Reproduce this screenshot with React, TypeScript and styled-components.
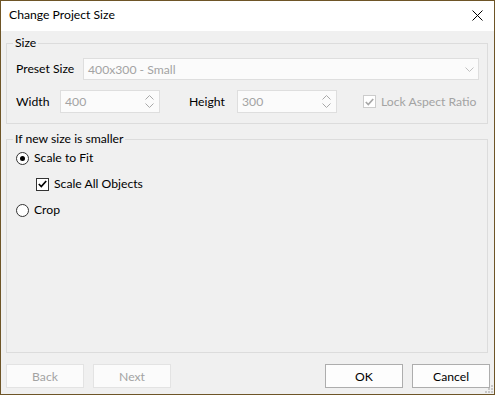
import React from "react";
import styled, { createGlobalStyle } from "styled-components";

const GlobalStyle = createGlobalStyle`
  html, body {
    margin: 0;
    padding: 0;
    background: #f0f0f0;
  }
  body {
    font-family: Lato, "Noto Sans", sans-serif;
    font-size: 12px;
    color: #000;
  }
`;

const Window = styled.div`
  width: 495px;
  height: 395px;
  box-sizing: border-box;
  border: 1px solid #6e5527;
  display: flex;
  flex-direction: column;
  background: #f0f0f0;
`;

const TitleBar = styled.div`
  height: 30px;
  background: #ffffff;
  display: flex;
  align-items: center;
  justify-content: space-between;
  padding: 0 8px 0 8px;
`;

const Title = styled.span`
  font-size: 12.2px;
  line-height: 16px;
  margin-top: -2px;
`;

const CloseButton = styled.div`
  width: 14px;
  height: 14px;
  display: flex;
  align-items: center;
  justify-content: center;
  margin-right: 2px;
  margin-top: -1px;
`;

const Body = styled.div`
  flex: 1;
  display: flex;
  flex-direction: column;
  padding: 4px 4px 6px 5px;
`;

const Group = styled.fieldset<{ $grow?: boolean }>`
  margin: 0 2px 0 0;
  padding: 0 8px 10px 9px;
  border: 1px solid #dcdcdc;
  min-width: 0;
  ${(p) => (p.$grow ? "flex: 1; margin-top: 7px;" : "")}
`;

const Legend = styled.legend`
  padding: 0 2px;
  margin-left: -3px;
  line-height: 16px;
  font-size: 12.2px;
`;

const Row = styled.div<{ $top: number }>`
  display: flex;
  align-items: center;
  margin-top: ${(p) => p.$top}px;
`;

const Label = styled.span<{ $w: number; $ml?: number }>`
  width: ${(p) => p.$w}px;
  margin-left: ${(p) => p.$ml ?? 0}px;
  flex-shrink: 0;
  line-height: 16px;
  font-size: 12.2px;
  white-space: nowrap;
`;

const Combo = styled.div`
  flex: 1;
  height: 22px;
  box-sizing: border-box;
  border: 1px solid #dedede;
  background: #fbfbfb;
  color: #a3a3a3;
  font-size: 12.2px;
  display: flex;
  align-items: center;
  justify-content: space-between;
  padding: 0 4px 0 4px;
`;

const Spin = styled.div`
  width: 100px;
  height: 23px;
  box-sizing: border-box;
  border: 1px solid #dedede;
  background: #fbfbfb;
  color: #a3a3a3;
  font-size: 12.2px;
  display: flex;
  align-items: center;
  justify-content: space-between;
  padding: 0 4px 0 4px;
`;

const SpinArrows = styled.div`
  display: flex;
  flex-direction: column;
  gap: 3px;
  margin-right: 1px;
`;

const Check = styled.span<{ $disabled?: boolean }>`
  width: 13px;
  height: 13px;
  box-sizing: border-box;
  border: 1px solid ${(p) => (p.$disabled ? "#cccccc" : "#333333")};
  background: #ffffff;
  display: inline-flex;
  align-items: center;
  justify-content: center;
  flex-shrink: 0;
`;

const Radio = styled.span<{ $checked?: boolean }>`
  width: 13px;
  height: 13px;
  box-sizing: border-box;
  border: 1px solid #333333;
  border-radius: 50%;
  background: #ffffff;
  display: inline-flex;
  align-items: center;
  justify-content: center;
  flex-shrink: 0;

  &::after {
    content: "";
    width: 5px;
    height: 5px;
    border-radius: 50%;
    background: ${(p) => (p.$checked ? "#000000" : "transparent")};
  }
`;

const Option = styled.label<{ $indent?: number; $top: number; $disabled?: boolean }>`
  display: flex;
  align-items: center;
  gap: 5px;
  margin-left: ${(p) => p.$indent ?? 0}px;
  margin-top: ${(p) => p.$top}px;
  color: ${(p) => (p.$disabled ? "#a3a3a3" : "#000000")};
  line-height: 16px;
  font-size: 12.2px;
  white-space: nowrap;
`;

const Footer = styled.div`
  display: flex;
  align-items: center;
  gap: 11px;
  margin-top: 11px;
  position: relative;
`;

const Button = styled.div<{ $disabled?: boolean }>`
  width: 78px;
  height: 24px;
  box-sizing: border-box;
  border: 1px solid ${(p) => (p.$disabled ? "#e3e3e3" : "#adadad")};
  background: ${(p) => (p.$disabled ? "#fbfbfb" : "#fdfdfd")};
  color: ${(p) => (p.$disabled ? "#a3a3a3" : "#000000")};
  font-size: 12.2px;
  display: flex;
  align-items: center;
  justify-content: center;

  & + & {
    margin-left: -2px;
  }
`;

const Spacer = styled.div`
  flex: 1;
`;

const Grip = styled.svg`
  position: absolute;
  right: -4px;
  bottom: -6px;
`;

const ChevronDown = ({ color = "#a8a8a8" }: { color?: string }) => (
  <svg width="9" height="5" viewBox="0 0 9 5">
    <polyline points="0.5,0.5 4.5,4.5 8.5,0.5" fill="none" stroke={color} strokeWidth="1" />
  </svg>
);

const ChevronUp = ({ color = "#a8a8a8" }: { color?: string }) => (
  <svg width="9" height="5" viewBox="0 0 9 5">
    <polyline points="0.5,4.5 4.5,0.5 8.5,4.5" fill="none" stroke={color} strokeWidth="1" />
  </svg>
);

const Tick = ({ color }: { color: string }) => (
  <svg width="9" height="8" viewBox="0 0 9 8">
    <polyline points="0.8,4 3.3,6.5 8.2,1" fill="none" stroke={color} strokeWidth="1.7" />
  </svg>
);

export default function App() {
  return (
    <>
      <GlobalStyle />
      <Window>
        <TitleBar>
          <Title>Change Project Size</Title>
          <CloseButton>
            <svg width="11" height="11" viewBox="0 0 11 11">
              <path d="M0.5 0.5 L10.5 10.5 M10.5 0.5 L0.5 10.5" stroke="#000" strokeWidth="1" />
            </svg>
          </CloseButton>
        </TitleBar>
        <Body>
          <Group>
            <Legend>Size</Legend>
            <Row $top={7}>
              <Label $w={67}>Preset Size</Label>
              <Combo>
                <span>400x300 - Small</span>
                <ChevronDown color="#c0c0c0" />
              </Combo>
            </Row>
            <Row $top={10}>
              <Label $w={44}>Width</Label>
              <Spin>
                <span>400</span>
                <SpinArrows>
                  <ChevronUp />
                  <ChevronDown />
                </SpinArrows>
              </Spin>
              <Label $w={48} $ml={29}>Height</Label>
              <Spin>
                <span>300</span>
                <SpinArrows>
                  <ChevronUp />
                  <ChevronDown />
                </SpinArrows>
              </Spin>
              <Option $top={0} $indent={26} $disabled>
                <Check $disabled>
                  <Tick color="#a8a8a8" />
                </Check>
                Lock Aspect Ratio
              </Option>
            </Row>
          </Group>
          <Group $grow>
            <Legend>If new size is smaller</Legend>
            <Option $top={3}>
              <Radio $checked />
              Scale to Fit
            </Option>
            <Option $top={10} $indent={20}>
              <Check>
                <Tick color="#000" />
              </Check>
              Scale All Objects
            </Option>
            <Option $top={10}>
              <Radio />
              Crop
            </Option>
          </Group>
          <Footer>
            <Button $disabled>Back</Button>
            <Button $disabled>Next</Button>
            <Spacer />
            <Button>OK</Button>
            <Button>Cancel</Button>
            <Grip width="10" height="10" viewBox="0 0 10 10">
              <rect x="7" y="1" width="2" height="2" fill="#c8c8c8" />
              <rect x="4" y="4" width="2" height="2" fill="#c8c8c8" />
              <rect x="7" y="4" width="2" height="2" fill="#c8c8c8" />
              <rect x="1" y="7" width="2" height="2" fill="#c8c8c8" />
              <rect x="4" y="7" width="2" height="2" fill="#c8c8c8" />
              <rect x="7" y="7" width="2" height="2" fill="#c8c8c8" />
            </Grip>
          </Footer>
        </Body>
      </Window>
    </>
  );
}
